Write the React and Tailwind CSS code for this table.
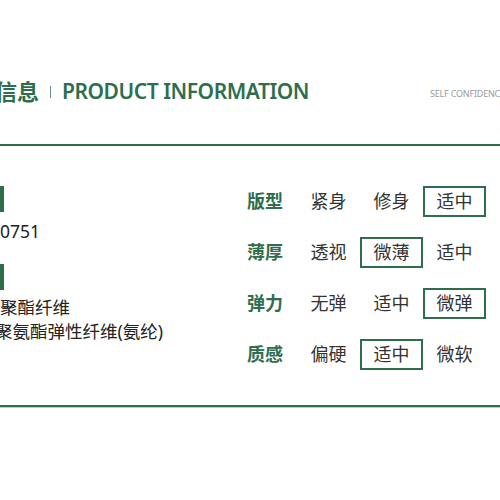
import React from "react";

const rows = [
  { label: "版型", opts: ["紧身", "修身", "适中"], sel: 2 },
  { label: "薄厚", opts: ["透视", "微薄", "适中"], sel: 1 },
  { label: "弹力", opts: ["无弹", "适中", "微弹"], sel: 2 },
  { label: "质感", opts: ["偏硬", "适中", "微软"], sel: 1 },
];

export default function App() {
  const font = { fontFamily: '"Noto Sans", "Noto Sans CJK SC", sans-serif' };
  return (
    <div className="w-[500px] h-[500px] overflow-hidden bg-white flex flex-col" style={font}>
      <div className="h-[144px] relative flex items-start pt-[76px]">
        <div className="flex items-center whitespace-nowrap">
          <span className="text-[22px] font-bold leading-[30px] text-[#2e6e4d] -ml-[49px]">产品信息</span>
          <span className="w-[1px] h-[12px] bg-[#6b8f7b] ml-[11px] mt-[2px]"></span>
          <span className="text-[21px] font-semibold leading-[30px] text-[#2e6e4d] ml-[11px] tracking-[-0.45px]">PRODUCT INFORMATION</span>
        </div>
        <div className="absolute left-[430px] top-[88px] text-[9px] leading-[12px] text-[#9a9a9a] whitespace-nowrap tracking-[-0.2px]">SELF CONFIDENCE</div>
      </div>
      <div className="h-[2px] bg-[#2e6e4d]"></div>
      <div className="h-[259px] flex">
        <div className="w-[247px] pt-[40px] flex flex-col text-[17.5px] text-[#222] leading-[24px] whitespace-nowrap">
          <div className="w-[4px] h-[26px] bg-[#2e6e4d]"></div>
          <div className="mt-[7px]">0751</div>
          <div className="w-[4px] h-[26px] bg-[#2e6e4d] mt-[21px]"></div>
          <div className="mt-[5px]">聚酯纤维</div>
          <div className="-ml-[5px]">聚氨酯弹性纤维(氨纶)</div>
        </div>
        <div className="pt-[40px] grid grid-cols-[50px_63px_63px_63px] auto-rows-[31px] gap-y-[20px]">
          {rows.map((r) => (
            <React.Fragment key={r.label}>
              <div className="flex items-center text-[18px] font-bold text-[#2e6e4d]">{r.label}</div>
              {r.opts.map((o, i) => (
                <div
                  key={i}
                  className={
                    "flex items-center justify-center text-[18px] text-[#333] " +
                    (i === r.sel ? "border-2 border-[#2e6e4d]" : "")
                  }
                >
                  {o}
                </div>
              ))}
            </React.Fragment>
          ))}
        </div>
      </div>
      <div className="h-[3px] bg-[#2e6e4d] border-b border-[#b9d3c4]"></div>
    </div>
  );
}
